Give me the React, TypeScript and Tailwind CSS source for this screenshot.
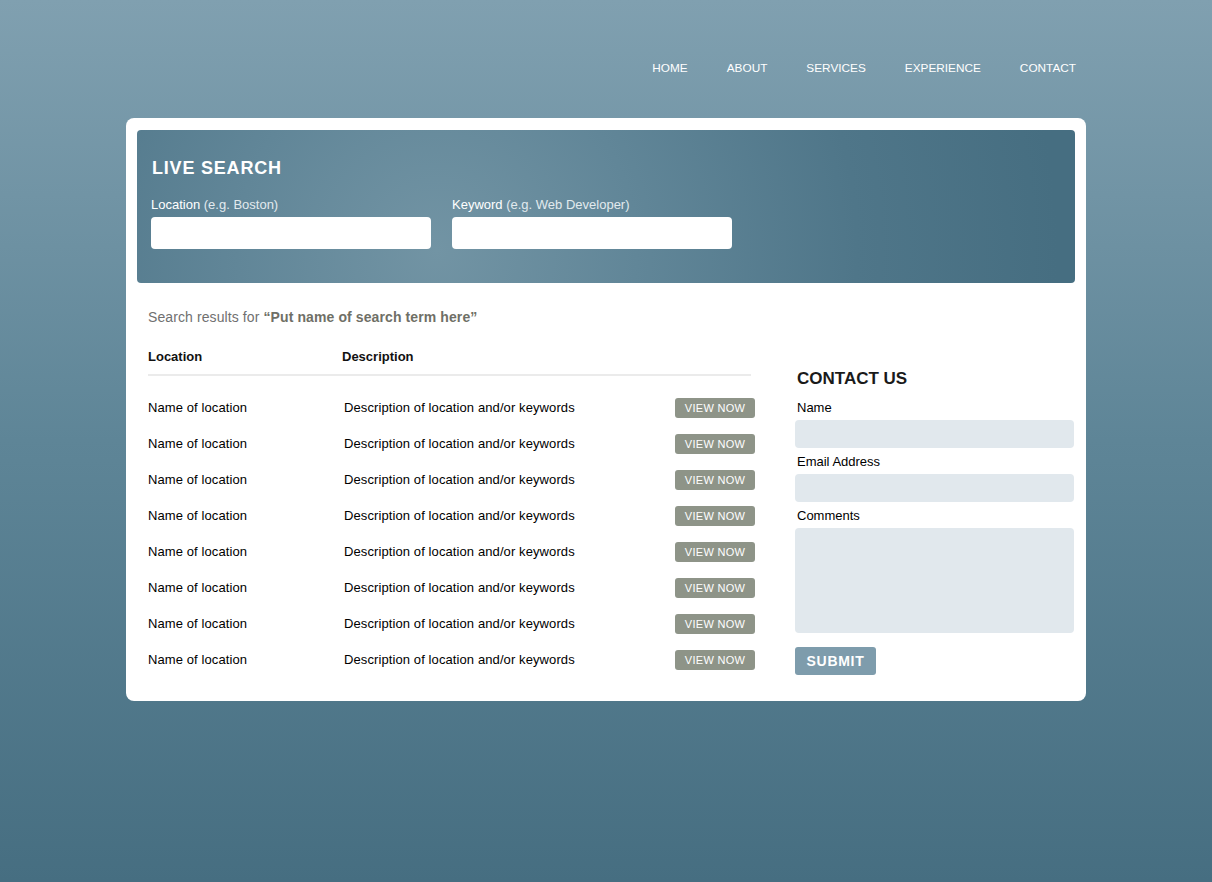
import React from "react";

const navItems = ["Home", "About", "Services", "Experience", "Contact"];

const rows = Array.from({ length: 8 }, () => ({
    location: "Name of location",
    description: "Description of location and/or keywords",
}));

/**
 * Live search page: top nav, search panel, results table and a contact form.
 */
const App: React.FC = () => {
    return (
        <div className="min-h-screen w-full bg-[linear-gradient(180deg,#80a0b0_0%,#5e8597_50%,#466e81_100%)] font-['Liberation_Sans',Arial,sans-serif] pb-[181px]">
            <div className="w-[960px] mx-auto">
                {/* Navigation */}
                <nav className="flex justify-end pr-[10px] pt-[60px] h-[118px]">
                    <ul className="flex gap-[39px] h-[14px] leading-[14px]">
                        {navItems.map((item) => (
                            <li key={item} className="leading-[14px]">
                                <a href="#" className="text-white text-[11.8px] leading-[14px] uppercase">
                                    {item}
                                </a>
                            </li>
                        ))}
                    </ul>
                </nav>

                {/* Main card */}
                <main className="bg-white rounded-[8px] p-[11px] pt-[12px] pb-[23px]">
                    {/* Live search panel */}
                    <section className="rounded-[4px] bg-[radial-gradient(circle_at_300px_120px,#7294a4_0px,#618698_200px,#4f7689_420px,#466e81_620px)] pt-[27px] pb-[34px] px-[14px]">
                        <h2 className="text-white font-bold text-[18px] leading-[22px] tracking-[0.8px] pl-[1px]">
                            LIVE SEARCH
                        </h2>
                        <div className="flex gap-[21px] mt-[18px]">
                            <label className="block w-[280px]">
                                <span className="block text-[13px] leading-[16px] text-white">
                                    Location <span className="text-[#e2eaee]">(e.g. Boston)</span>
                                </span>
                                <input className="mt-[4px] block w-full h-[32px] bg-white rounded-[4px] outline-none px-2" />
                            </label>
                            <label className="block w-[280px]">
                                <span className="block text-[13px] leading-[16px] text-white">
                                    Keyword <span className="text-[#e2eaee]">(e.g. Web Developer)</span>
                                </span>
                                <input className="mt-[4px] block w-full h-[32px] bg-white rounded-[4px] outline-none px-2" />
                            </label>
                        </div>
                    </section>

                    <div className="pl-[11px] pr-[1px]">
                        <p className="mt-[24px] text-[14px] leading-[20px] text-[#707070] tracking-[0.1px]">
                            Search results for{" "}
                            <strong className="text-[#6f6f66]">“Put name of search term here”</strong>
                        </p>

                        <div className="flex mt-[21px] gap-[40px]">
                            {/* Results table */}
                            <div className="w-[607px]">
                                <div className="flex w-[603px] border-b-2 border-[#ebebeb] pb-[8px] text-[13px] leading-[18px] font-bold text-[#111]">
                                    <span className="w-[194px]">Location</span>
                                    <span>Description</span>
                                </div>
                                <ul className="pt-[14px]">
                                    {rows.map((row, i) => (
                                        <li key={i} className="flex items-center h-[36px] text-[13px] text-black tracking-[0.1px]">
                                            <span className="w-[196px]">{row.location}</span>
                                            <span className="flex-1">{row.description}</span>
                                            <button className="w-[80px] h-[20px] rounded-[3px] bg-[#8e9488] text-white text-[11px] leading-[20px] tracking-[0.3px]">
                                                VIEW NOW
                                            </button>
                                        </li>
                                    ))}
                                </ul>
                            </div>

                            {/* Contact form */}
                            <form className="w-[279px] mt-[20px]">
                                <h3 className="text-[17px] leading-[22px] font-bold text-[#1a1a1a] pl-[2px]">
                                    CONTACT US
                                </h3>
                                <label className="block mt-[10px]">
                                    <span className="block text-[13px] leading-[16px] text-black pl-[2px]">Name</span>
                                    <input className="mt-[4px] block w-full h-[28px] bg-[#e1e8ed] rounded-[4px] outline-none px-2" />
                                </label>
                                <label className="block mt-[6px]">
                                    <span className="block text-[13px] leading-[16px] text-black pl-[2px]">Email Address</span>
                                    <input className="mt-[4px] block w-full h-[28px] bg-[#e1e8ed] rounded-[4px] outline-none px-2" />
                                </label>
                                <label className="block mt-[6px]">
                                    <span className="block text-[13px] leading-[16px] text-black pl-[2px]">Comments</span>
                                    <textarea className="mt-[4px] block w-full h-[105px] bg-[#e1e8ed] rounded-[4px] outline-none px-2 resize-none" />
                                </label>
                                <button
                                    type="button"
                                    className="block mt-[14px] w-[81px] h-[28px] rounded-[3px] bg-[#7e9cac] text-white font-bold text-[14px] tracking-[0.7px]"
                                >
                                    SUBMIT
                                </button>
                            </form>
                        </div>
                    </div>
                </main>
            </div>
        </div>
    );
};

export default App;
